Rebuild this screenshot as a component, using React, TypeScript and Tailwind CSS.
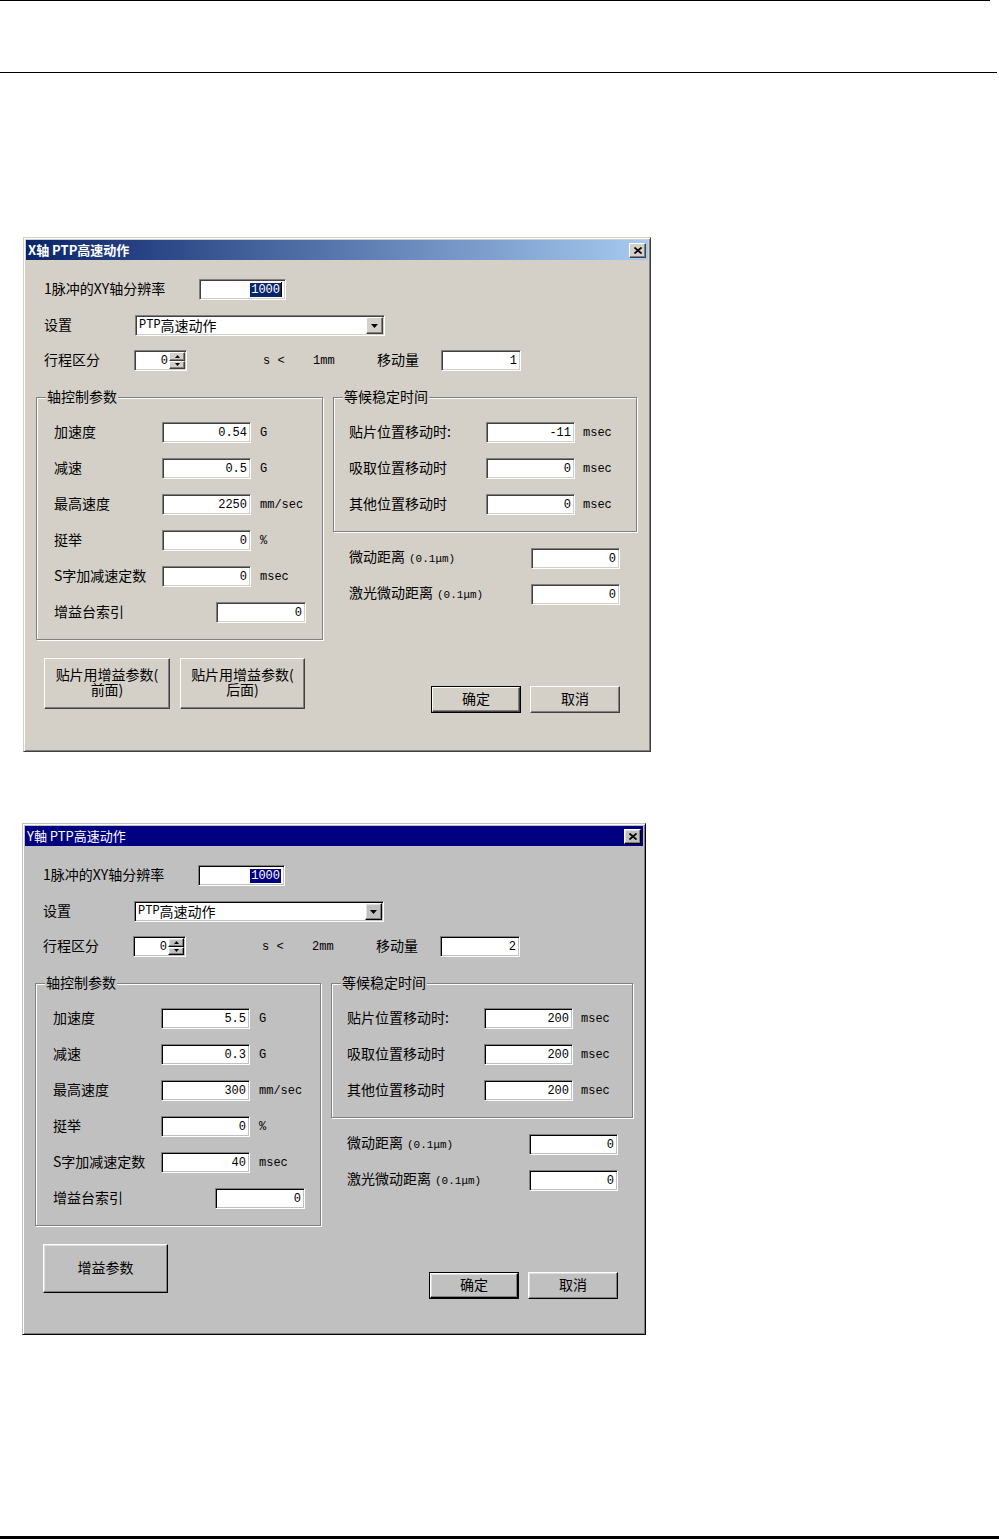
import React from "react";

const cjk = "font-['Noto_Sans_CJK_SC','Noto_Sans',sans-serif]";
const mono = "font-['Liberation_Mono','Noto_Sans_CJK_SC',monospace]";
// CJK glyphs sit low with leading-none, lift them a bit to line up with the fields
const lbl = "pb-[4px]";

type Theme = {
  bg: string;
  frame: string;
  title: string;
  titleText: string;
  sunken: string;
  raised: string;
  sel: string;
};

// win2000 look for the first shot, win98 for the second
const XP: Theme = {
  bg: "bg-[#d4d0c8]",
  frame:
    "border border-t-[#d4d0c8] border-l-[#d4d0c8] border-r-[#404040] border-b-[#404040] shadow-[inset_1px_1px_0_#ffffff,inset_-1px_-1px_0_#808080]",
  title: "bg-[linear-gradient(90deg,#0a246a,#a6caf0)]",
  titleText: "font-bold text-[13px]",
  sunken: "shadow-[inset_1px_1px_0_#404040,inset_-1px_-1px_0_#d4d0c8]",
  raised:
    "bg-[#d4d0c8] border border-t-white border-l-white border-r-[#404040] border-b-[#404040] shadow-[inset_-1px_-1px_0_#808080,inset_1px_1px_0_#d4d0c8]",
  sel: "bg-[#0a246a]",
};

const CLASSIC: Theme = {
  bg: "bg-[#c0c0c0]",
  frame:
    "border border-t-[#c0c0c0] border-l-[#c0c0c0] border-r-[#000000] border-b-[#000000] shadow-[inset_1px_1px_0_#ffffff,inset_-1px_-1px_0_#808080]",
  title: "bg-[#000080]",
  titleText: "font-normal text-[13px]",
  sunken: "shadow-[inset_1px_1px_0_#000000,inset_-1px_-1px_0_#c0c0c0]",
  raised:
    "bg-[#c0c0c0] border border-t-white border-l-white border-r-[#000000] border-b-[#000000] shadow-[inset_-1px_-1px_0_#808080,inset_1px_1px_0_#dfdfdf]",
  sel: "bg-[#000080]",
};

type Row = { label: string; value: string; unit?: string };

type DialogData = {
  title: string;
  size: string;
  cols: [string, string];
  res: string;
  caret: boolean;
  dist: string;
  move: string;
  axis: Row[];
  gain: string;
  wait: Row[];
  jog: string;
  laser: string;
  buttons: { text: string; w: string; h: string }[];
};

const sunkenBase =
  "bg-white border border-t-[#808080] border-l-[#808080] border-r-white border-b-white p-[1px]";

function Field({ t, w, children }: { t: Theme; w: string; children: React.ReactNode }) {
  return (
    <div
      className={`${w} h-[21px] shrink-0 ${sunkenBase} ${t.sunken} flex items-center justify-end pr-[3px] ${mono} text-[12px] leading-none`}
    >
      {children}
    </div>
  );
}

function Group({
  t,
  label,
  className,
  children,
}: {
  t: Theme;
  label: string;
  className: string;
  children: React.ReactNode;
}) {
  return (
    <div
      className={`relative border border-[#808080] shadow-[inset_1px_1px_0_#ffffff,1px_1px_0_#ffffff] ${className}`}
    >
      <span className={`absolute left-[9px] -top-[10px] px-[1px] leading-[16px] ${t.bg}`}>
        {label}
      </span>
      {children}
    </div>
  );
}

function CloseButton({ t }: { t: Theme }) {
  return (
    <div className={`w-[17px] h-[15px] ${t.raised} flex items-center justify-center`}>
      <svg width="8" height="7" viewBox="0 0 8 7">
        <path d="M0.5 0.5 L7.5 6.5 M7.5 0.5 L0.5 6.5" stroke="#000" strokeWidth="1.7" />
      </svg>
    </div>
  );
}

function Dialog({ t, d }: { t: Theme; d: DialogData }) {
  return (
    <div
      className={`${d.size} ${t.bg} ${t.frame} p-[2px] flex flex-col text-black ${cjk} text-[14px] leading-none`}
    >
      <div className={`h-[20px] ${t.title} flex items-center justify-between pl-[2px] pr-[2px]`}>
        <span className={`text-white pb-[2px] ${t.titleText}`}>{d.title}</span>
        <CloseButton t={t} />
      </div>

      <div className="flex flex-col pt-[19px] pl-[10px]">
        <div className="flex items-center pl-[8px]">
          <span className={`w-[155px] ${lbl}`}>1脉冲的XY轴分辨率</span>
          <Field t={t} w="w-[87px]">
            <span className={`${t.sel} text-white px-[1px] leading-[14px]`}>{d.res}</span>
            {d.caret && <span className="w-px h-[15px] bg-black" />}
          </Field>
        </div>

        <div className="flex items-center pl-[8px] mt-[15px]">
          <span className={`w-[91px] ${lbl}`}>设置</span>
          <div className={`w-[250px] h-[21px] ${sunkenBase} ${t.sunken} flex items-stretch`}>
            <div className="flex-1 flex items-center pl-[2px] pb-[2px]">
              <span className={`${mono} text-[12px]`}>PTP</span>
              <span>高速动作</span>
            </div>
            <div className={`w-[17px] ${t.raised} flex items-center justify-center`}>
              <svg width="7" height="4" viewBox="0 0 7 4">
                <polygon points="0,0 7,0 3.5,4" fill="#000" />
              </svg>
            </div>
          </div>
        </div>

        <div className="flex items-center pl-[8px] mt-[14px]">
          <span className={`w-[90px] ${lbl}`}>行程区分</span>
          <div className={`w-[53px] h-[21px] ${sunkenBase} ${t.sunken} flex items-stretch`}>
            <div className={`flex-1 flex items-center justify-end pr-[1px] ${mono} text-[12px]`}>0</div>
            <div className="w-[16px] flex flex-col">
              <div className={`flex-1 ${t.raised} flex items-center justify-center`}>
                <svg width="5" height="3" viewBox="0 0 5 3">
                  <polygon points="0,3 5,3 2.5,0" fill="#000" />
                </svg>
              </div>
              <div className={`flex-1 ${t.raised} flex items-center justify-center`}>
                <svg width="5" height="3" viewBox="0 0 5 3">
                  <polygon points="0,0 5,0 2.5,3" fill="#000" />
                </svg>
              </div>
            </div>
          </div>
          <span className={`ml-[76px] w-[50px] ${mono} text-[12px]`}>s &lt;</span>
          <span className={`w-[64px] ${mono} text-[12px]`}>{d.dist}</span>
          <span className={`w-[64px] ${lbl}`}>移动量</span>
          <Field t={t} w="w-[80px]">
            {d.move}
          </Field>
        </div>

        <div className="flex gap-[10px] mt-[26px]">
          <div className={`${d.cols[0]} flex flex-col`}>
            <Group t={t} label="轴控制参数" className="flex flex-col gap-[15px] pt-[24px] pb-[16px] pl-[17px]">
              {d.axis.map((r) => (
                <div key={r.label} className="flex items-center">
                  <span className={`w-[108px] ${lbl}`}>{r.label}</span>
                  <Field t={t} w="w-[89px]">
                    {r.value}
                  </Field>
                  <span className={`ml-[9px] ${mono} text-[12px]`}>{r.unit}</span>
                </div>
              ))}
              <div className="flex items-center">
                <span className={`w-[162px] ${lbl}`}>增益台索引</span>
                <Field t={t} w="w-[90px]">
                  {d.gain}
                </Field>
              </div>
            </Group>

            <div className="flex gap-[10px] mt-[18px] pl-[8px]">
              {d.buttons.map((b, i) => (
                <div
                  key={i}
                  className={`${b.w} ${b.h} ${t.raised} flex items-center justify-center pb-[3px]`}
                >
                  <span className="whitespace-pre-line text-center leading-[15px]">{b.text}</span>
                </div>
              ))}
            </div>
          </div>

          <div className={`${d.cols[1]} flex flex-col`}>
            <Group t={t} label="等候稳定时间" className="flex flex-col gap-[15px] pt-[24px] pb-[16px] pl-[15px]">
              {d.wait.map((r) => (
                <div key={r.label} className="flex items-center">
                  <span className={`w-[137px] ${lbl}`}>{r.label}</span>
                  <Field t={t} w="w-[89px]">
                    {r.value}
                  </Field>
                  <span className={`ml-[8px] ${mono} text-[12px]`}>msec</span>
                </div>
              ))}
            </Group>

            <div className="flex items-center mt-[16px] pl-[16px]">
              <span className={`w-[182px] ${lbl}`}>
                微动距离<span className={`ml-[4px] ${mono} text-[11px]`}>(0.1μm)</span>
              </span>
              <Field t={t} w="w-[89px]">
                {d.jog}
              </Field>
            </div>
            <div className="flex items-center mt-[15px] pl-[16px]">
              <span className={`w-[182px] ${lbl}`}>
                激光微动距离<span className={`ml-[4px] ${mono} text-[11px]`}>(0.1μm)</span>
              </span>
              <Field t={t} w="w-[89px]">
                {d.laser}
              </Field>
            </div>

            <div className="flex gap-[9px] mt-[81px] pl-[98px]">
              <div className="w-[90px] h-[27px] border border-black flex">
                <div className={`flex-1 ${t.raised} flex items-center justify-center pb-[3px]`}>确定</div>
              </div>
              <div className={`w-[90px] h-[27px] ${t.raised} flex items-center justify-center pb-[3px]`}>
                取消
              </div>
            </div>
          </div>
        </div>
      </div>
    </div>
  );
}

const dlgX: DialogData = {
  title: "X轴 PTP高速动作",
  size: "w-[628px] h-[515px]",
  cols: ["w-[287px]", "w-[304px]"],
  res: "1000",
  caret: true,
  dist: "1mm",
  move: "1",
  axis: [
    { label: "加速度", value: "0.54", unit: "G" },
    { label: "减速", value: "0.5", unit: "G" },
    { label: "最高速度", value: "2250", unit: "mm/sec" },
    { label: "挺举", value: "0", unit: "%" },
    { label: "S字加减速定数", value: "0", unit: "msec" },
  ],
  gain: "0",
  wait: [
    { label: "贴片位置移动时:", value: "-11" },
    { label: "吸取位置移动时", value: "0" },
    { label: "其他位置移动时", value: "0" },
  ],
  jog: "0",
  laser: "0",
  buttons: [
    { text: "贴片用增益参数(\n前面)", w: "w-[126px]", h: "h-[51px]" },
    { text: "贴片用增益参数(\n后面)", w: "w-[125px]", h: "h-[51px]" },
  ],
};

const dlgY: DialogData = {
  title: "Y軸 PTP高速动作",
  size: "w-[624px] h-[512px]",
  cols: ["w-[286px]", "w-[302px]"],
  res: "1000",
  caret: false,
  dist: "2mm",
  move: "2",
  axis: [
    { label: "加速度", value: "5.5", unit: "G" },
    { label: "减速", value: "0.3", unit: "G" },
    { label: "最高速度", value: "300", unit: "mm/sec" },
    { label: "挺举", value: "0", unit: "%" },
    { label: "S字加减速定数", value: "40", unit: "msec" },
  ],
  gain: "0",
  wait: [
    { label: "贴片位置移动时:", value: "200" },
    { label: "吸取位置移动时", value: "200" },
    { label: "其他位置移动时", value: "200" },
  ],
  jog: "0",
  laser: "0",
  buttons: [{ text: "增益参数", w: "w-[125px]", h: "h-[49px]" }],
};

export default function App() {
  return (
    <div className="w-[999px] h-[1539px] bg-white flex flex-col">
      <div className="w-[990px] h-px bg-black" />
      <div className="w-[997px] h-px bg-black mt-[71px]" />
      <div className="mt-[164px] ml-[23px]">
        <Dialog t={XP} d={dlgX} />
      </div>
      <div className="mt-[71px] ml-[22px]">
        <Dialog t={CLASSIC} d={dlgY} />
      </div>
      <div className="mt-auto h-[3px] bg-black" />
    </div>
  );
}
